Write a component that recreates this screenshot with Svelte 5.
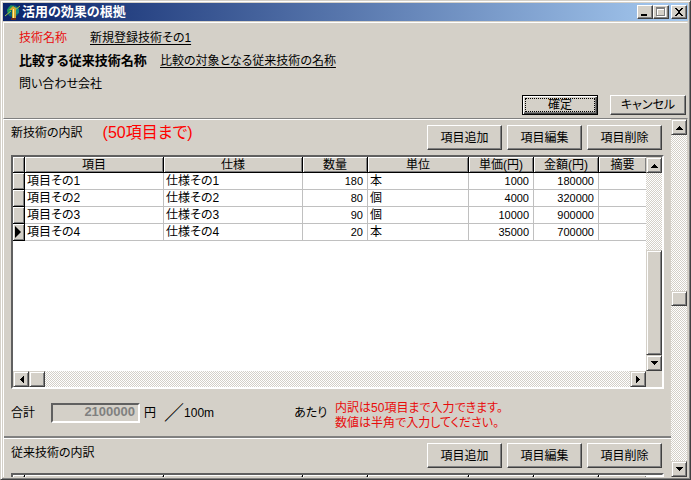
<script>
    let title = "活用の効果の根拠"
    let unit = "100m"

    let columns = [
        { key: "name", label: "項目", width: 139 },
        { key: "spec", label: "仕様", width: 139 },
        { key: "amount", label: "数量", width: 65, num: true },
        { key: "unit", label: "単位", width: 101 },
        { key: "price", label: "単価(円)", width: 65, num: true },
        { key: "total", label: "金額(円)", width: 65, num: true },
        { key: "note", label: "摘要" },
    ]

    let items = $state([
        { name: "項目その1", spec: "仕様その1", amount: 180, unit: "本", price: 1000 },
        { name: "項目その2", spec: "仕様その2", amount: 80, unit: "個", price: 4000 },
        { name: "項目その3", spec: "仕様その3", amount: 90, unit: "個", price: 10000 },
        { name: "項目その4", spec: "仕様その4", amount: 20, unit: "本", price: 35000 },
    ])
    let selected = $state(3)

    let rows = $derived(items.map((i) => ({ ...i, total: i.amount * i.price })))
    let sum = $derived(rows.reduce((s, r) => s + r.total, 0))
</script>

{#snippet arrow(dir, label)}
    <button class="arrow" aria-label={label}>
        <svg width="7" height="7" viewBox="0 0 7 7" class={dir} shape-rendering="crispEdges" aria-hidden="true">
            <path d="M3 2h1v1h1v1h1v1h1v1H0V5h1V4h1V3h1z" />
        </svg>
    </button>
{/snippet}

<!-- before / after: share of free track on each side of the thumb -->
{#snippet scrollbar(kind, before, after, size)}
    <div class="scrollbar {kind}">
        {@render arrow(kind === "vert" ? "up" : "left", kind === "vert" ? "上へ" : "左へ")}
        <div style="flex-grow: {before}"></div>
        <div class="thumb" style="flex-basis: {size}px"></div>
        <div style="flex-grow: {after}"></div>
        {@render arrow(kind === "vert" ? "down" : "right", kind === "vert" ? "下へ" : "右へ")}
    </div>
{/snippet}

{#snippet tools()}
    <div class="tools">
        <button class="btn">項目追加</button>
        <button class="btn">項目編集</button>
        <button class="btn">項目削除</button>
    </div>
{/snippet}

{#snippet cols()}
    <colgroup>
        <col style="width: 12px" />
        {#each columns as col}
            <col style={col.width ? `width: ${col.width}px` : null} />
        {/each}
    </colgroup>
{/snippet}

<div class="window">
    <header class="titlebar">
        <svg class="logo" width="16" height="16" viewBox="0 0 16 16" aria-hidden="true">
            <circle cx="8" cy="7" r="6" fill="#0c6470" />
            <path d="M2 6l4-5 2 2-3 5-2 1z" fill="#1e9a58" />
            <path d="M10 2l4 3v4l-4 2z" fill="#148a84" />
            <path d="M0 12L6 7M10 6l5-4" stroke="#a8cc3c" stroke-width="1" />
            <path d="M4 6l4-4 3 2v10H7V6z" fill="#d0a830" />
            <path d="M8 5h1v9H8z" fill="#fff2a0" />
            <path d="M6 14h5v2H6z" fill="#6a2a1c" />
        </svg>
        <h1>{title}</h1>
        <div class="controls">
            <button aria-label="最小化">
                <svg width="10" height="10" viewBox="0 0 10 10" shape-rendering="crispEdges"><path d="M1 7h6v2H1z" /></svg>
            </button>
            <button aria-label="最大化" disabled>
                <svg width="10" height="10" viewBox="0 0 10 10" shape-rendering="crispEdges">
                    <path d="M1 1h9v9H1zM2 3v6h7V3z" fill="#fff" fill-rule="evenodd" />
                    <path d="M0 0h9v9H0zM1 2v6h7V2z" fill="#808080" fill-rule="evenodd" />
                </svg>
            </button>
            <button class="close" aria-label="閉じる">
                <svg width="10" height="10" viewBox="0 0 10 10" shape-rendering="crispEdges">
                    <path d="M1 1h2v1h1v1h2V2h1V1h2v1H8v1H7v1H6v2h1v1h1v1h1v1H7V8H6V7H4v1H3v1H1V8h1V7h1V6h1V4H3V3H2V2H1z" />
                </svg>
            </button>
        </div>
    </header>

    <section class="summary">
        <p><span class="red short">技術名称</span><a href="#tech">新規登録技術その1</a></p>
        <p><strong>比較する従来技術名称</strong><a href="#compare">比較の対象となる従来技術の名称</a></p>
        <p>問い合わせ会社</p>
        <div class="actions">
            <button class="btn small default"><span>確定</span></button>
            <button class="btn small">キャンセル</button>
        </div>
    </section>

    <main>
        <div class="pane">
            <section class="block">
                <div class="bar">
                    <h2>新技術の内訳</h2>
                    <span class="limit">(50項目まで)</span>
                    {@render tools()}
                </div>
                <div class="grid">
                    <div class="gridTop">
                        <div class="sheet">
                            <table>
                                {@render cols()}
                                <thead>
                                    <tr>
                                        <th></th>
                                        {#each columns as col}
                                            <th scope="col">{col.label}</th>
                                        {/each}
                                    </tr>
                                </thead>
                                <tbody>
                                    {#each rows as row, i}
                                        <tr onclick={() => (selected = i)}>
                                            <td class="mark">
                                                {#if i === selected}
                                                    <svg width="6" height="12" viewBox="0 0 6 12" aria-hidden="true"><path d="M0 0L6 6L0 12z" /></svg>
                                                {/if}
                                            </td>
                                            {#each columns as col}
                                                <td class:num={col.num}>{row[col.key] ?? ""}</td>
                                            {/each}
                                        </tr>
                                    {/each}
                                </tbody>
                            </table>
                        </div>
                        {@render scrollbar("vert", 1, 0, 105)}
                    </div>
                    <div class="gridBottom">
                        {@render scrollbar("horz", 0, 1, 16)}
                        <div class="corner"></div>
                    </div>
                </div>
                <div class="sum">
                    <label for="sum">合計</label>
                    <input id="sum" value={sum} disabled />
                    <span>円</span>
                    <span class="slash">／</span>
                    <span>{unit}</span>
                    <span class="per">あたり</span>
                    <p class="red">内訳は50項目まで入力できます。<br />数値は半角で入力してください。</p>
                </div>
            </section>
            <section class="block old">
                <div class="bar">
                    <h2>従来技術の内訳</h2>
                    {@render tools()}
                </div>
                <div class="grid">
                    <div class="sheet">
                        <table>
                            {@render cols()}
                            <tbody>
                                <tr>
                                    <td class="mark"></td>
                                    {#each columns as col}
                                        <td class="mark"></td>
                                    {/each}
                                </tr>
                            </tbody>
                        </table>
                    </div>
                </div>
            </section>
        </div>
        {@render scrollbar("vert", 155, 155, 15)}
    </main>
</div>

<style>
    :global(body) {
        margin: 0;
        background: #d4d0c8;
    }
    .window, .window * {
        box-sizing: border-box;
    }
    .window {
        height: 100vh;
        display: flex;
        flex-direction: column;
        padding: 2px;
        border: 1px solid;
        border-color: #d4d0c8 #404040 #404040 #d4d0c8;
        box-shadow: inset 1px 1px #fff, inset -1px -1px #808080;
        background: #d4d0c8;
        color: #000;
        font: 12px/16px "Liberation Sans", "Noto Sans CJK JP", sans-serif;
        font-feature-settings: "palt";
        overflow: hidden;
    }
    h1, h2, p {
        margin: 0;
        font-size: 12px;
        font-weight: normal;
    }
    button, input {
        margin: 0;
        padding: 0;
        font: inherit;
        font-feature-settings: inherit;
        color: inherit;
        border-radius: 0;
    }
    .red {
        color: #e80c0c;
    }

    /* title bar */
    .titlebar {
        display: flex;
        align-items: center;
        flex: none;
        height: 18px;
        padding: 0 1px 0 2px;
        background: linear-gradient(to right, #0a246a, #a6caf0);
    }
    h1 {
        flex: 1;
        padding-left: 1px;
        color: #fff;
        font-size: 13px;
        font-weight: bold;
    }
    .controls {
        display: flex;
    }
    .controls button {
        display: flex;
        align-items: center;
        justify-content: center;
        width: 16px;
        height: 14px;
        background: #d4d0c8;
        border: 1px solid;
        border-color: #fff #404040 #404040 #fff;
        box-shadow: inset -1px -1px #808080;
    }
    .controls .close {
        margin-left: 2px;
    }

    /* upper panel */
    .summary {
        flex: none;
        margin-top: 1px;
        padding: 3px 1px 3px 15px;
        border: 1px solid;
        border-color: #fff #d4d0c8 #808080 #fff;
    }
    .summary p {
        display: flex;
        align-items: center;
        height: 23px;
    }
    .summary a {
        color: inherit;
        text-underline-offset: 2px;
    }
    .short {
        width: 71px;
    }
    strong {
        width: 141px;
        font-size: 13px;
    }
    .actions {
        display: flex;
        justify-content: flex-end;
        gap: 12px;
    }

    .btn {
        width: 75px;
        height: 25px;
        background: #d4d0c8;
        border: 1px solid;
        border-color: #fff #404040 #404040 #fff;
        box-shadow: inset -1px -1px #808080;
    }
    .btn.small {
        width: 76px;
        height: 20px;
        line-height: 16px;
    }
    .btn.default {
        padding: 2px;
        border-color: #000;
        box-shadow: inset 1px 1px #fff, inset -1px -1px #404040, inset -2px -2px #808080;
    }
    .default span {
        display: block;
        height: 14px;
        line-height: 12px;
        border: 1px dotted #000;
    }

    /* scrolling area */
    main {
        display: flex;
        flex: 1;
        min-height: 0;
        padding-right: 1px;
        border-left: 1px solid #fff;
    }
    .pane {
        flex: 1;
        min-width: 0;
        overflow: hidden;
    }
    .block {
        padding: 5px 7px 0;
        border-top: 1px solid #fff;
    }
    .block:first-child {
        border-bottom: 2px solid #808080;
    }
    .old {
        padding-top: 4px;
    }
    .bar {
        display: flex;
        align-items: center;
        height: 25px;
        margin-bottom: 5px;
    }
    .bar h2 {
        margin-bottom: 10px;
    }
    .old h2 {
        margin-bottom: 5px;
    }
    .limit {
        margin: 0 0 10px 20px;
        color: #ff0000;
        font-size: 16px;
    }
    .tools {
        display: flex;
        gap: 5px;
        margin-left: auto;
        padding-right: 2px;
    }

    .grid {
        border: 2px solid;
        border-color: #606060 #fff #fff #606060;
    }
    .gridTop {
        display: flex;
        height: 214px;
    }
    .sheet {
        flex: 1;
        min-width: 0;
        overflow: hidden;
        background: #fff;
    }
    .gridBottom {
        display: flex;
    }
    .gridBottom .scrollbar {
        flex: 1;
    }
    .corner {
        width: 16px;
        background: #d4d0c8;
    }
    table {
        width: 100%;
        table-layout: fixed;
        border-collapse: separate;
        border-spacing: 0;
        line-height: 14px;
    }
    .old table {
        padding-right: 16px;
    }
    th {
        height: 16px;
        padding: 0;
        font-weight: normal;
        background: #d4d0c8;
        border-right: 1px solid #000;
        border-bottom: 1px solid #000;
        box-shadow: inset 1px 1px #fff, inset -1px -1px #808080;
    }
    td {
        height: 17px;
        padding: 0 2px;
        border-right: 1px solid #c0c0c0;
        border-bottom: 1px solid #c0c0c0;
        white-space: nowrap;
    }
    th:last-child, td:last-child {
        border-right: none;
    }
    .num {
        padding-right: 4px;
        text-align: right;
        font-size: 11px;
    }
    .mark {
        background: #d4d0c8;
        border-color: #000;
        box-shadow: inset 1px 1px #fff, inset -1px -1px #808080;
    }
    .mark svg {
        display: block;
    }

    .scrollbar {
        display: flex;
        flex: none;
        background: repeating-conic-gradient(#fff 0 25%, #d4d0c8 0 50%) 0 0 / 2px 2px;
    }
    .vert {
        flex-direction: column;
        width: 16px;
    }
    .horz {
        height: 16px;
    }
    .arrow, .thumb {
        flex: none;
        background: #d4d0c8;
        border: 1px solid;
        border-color: #d4d0c8 #404040 #404040 #d4d0c8;
        box-shadow: inset 1px 1px #fff, inset -1px -1px #808080;
    }
    .arrow {
        display: flex;
        align-items: center;
        justify-content: center;
        width: 16px;
        height: 16px;
    }
    .down {
        transform: rotate(180deg);
    }
    .left {
        transform: rotate(-90deg);
    }
    .right {
        transform: rotate(90deg);
    }

    /* total */
    .sum {
        display: flex;
        align-items: center;
        height: 47px;
    }
    .sum input {
        width: 89px;
        height: 20px;
        margin: 0 4px 0 16px;
        padding: 0 3px 2px;
        border: 2px solid;
        border-color: #606060 #fff #fff #606060;
        background: #d4d0c8;
        color: #808080;
        font-weight: bold;
        font-size: 13px;
        text-align: right;
    }
    .slash {
        margin-left: 8px;
        font-size: 20px;
        font-feature-settings: normal;
    }
    .per {
        width: 41px;
        margin-left: 80px;
    }
    .sum p {
        padding-top: 6px;
        line-height: 15px;
        white-space: nowrap;
    }
</style>
